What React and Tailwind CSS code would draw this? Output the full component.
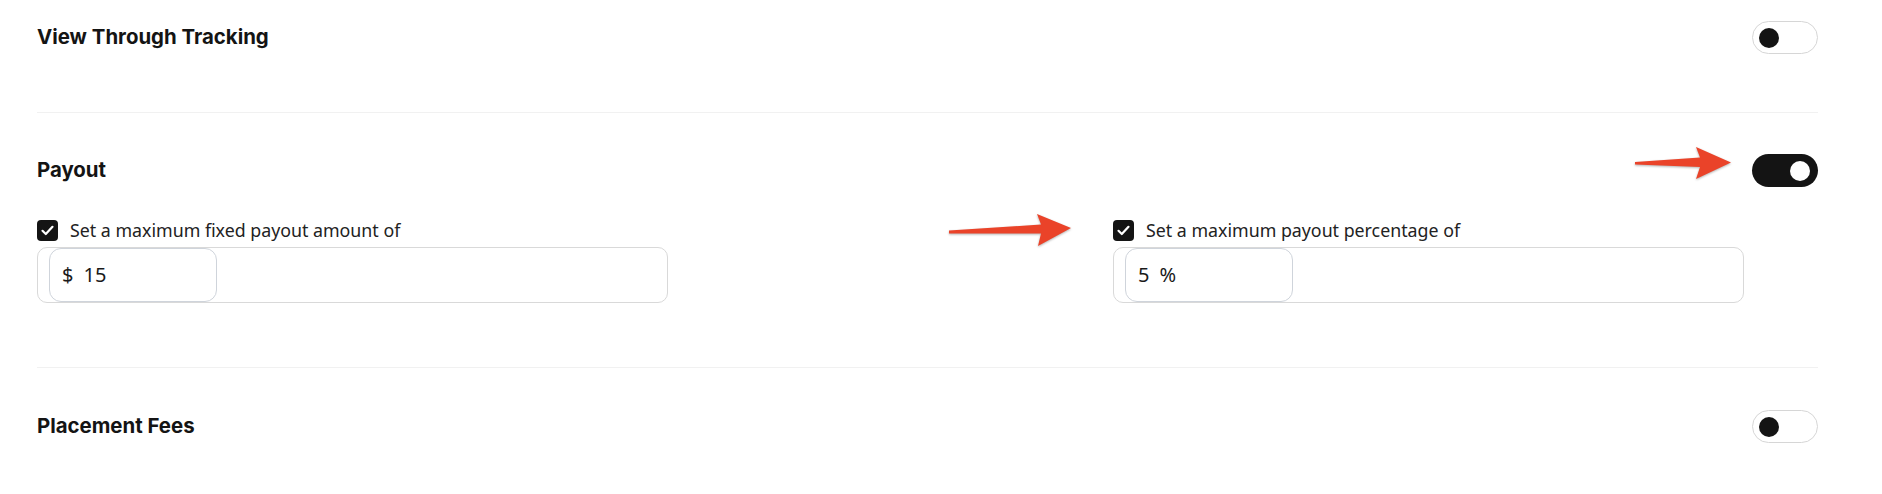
import React from "react";

const headingFont = { fontFamily: "Inter, 'Noto Sans', sans-serif" };

function Toggle({ on }) {
  if (on) {
    return (
      <div className="flex h-[33px] w-[66px] items-center justify-end rounded-full bg-[#141414] pr-[8px]">
        <span className="h-[20px] w-[20px] rounded-full bg-white" />
      </div>
    );
  }
  return (
    <div className="flex h-[33px] w-[66px] items-center rounded-full border border-[#d6d6d6] bg-white pl-[6px]">
      <span className="h-[20px] w-[20px] rounded-full bg-[#141414]" />
    </div>
  );
}

function Checkbox() {
  return (
    <span className="flex h-[21px] w-[21px] items-center justify-center rounded-[4px] bg-[#141414]">
      <svg width="15" height="15" viewBox="0 0 15 15" fill="none">
        <path d="M2.5 7.8 L5.8 11 L12.5 3.8" stroke="white" strokeWidth="2.2" strokeLinecap="round" strokeLinejoin="round" />
      </svg>
    </span>
  );
}

function AmountField({ label, prefix, value }) {
  return (
    <div className="flex flex-col">
      <label className="flex h-[22px] items-center gap-[12px] text-[17.8px] text-[#222]">
        <Checkbox />
        <span>{label}</span>
      </label>
      <div className="mt-[6px] flex h-[56px] w-[631px] rounded-[10px] border border-[#d9d9d9] pl-[11px]">
        <div className="flex w-[168px] items-center gap-[10px] rounded-[12px] border border-[#cfd4db] pl-[12px] text-[20px] text-[#1a1a1a]">
          <span>{prefix}</span>
          <span>{value}</span>
        </div>
      </div>
    </div>
  );
}

function Arrow({ className, d, w, h }) {
  return (
    <svg
      className={className}
      width={w}
      height={h}
      viewBox={`0 0 ${w} ${h}`}
      fill="#ea4329"
    >
      <path d={d} />
    </svg>
  );
}

export default function App() {
  return (
    <div
      className="relative h-[494px] w-full overflow-hidden bg-white pl-[37px] pr-[64px]"
      style={{ fontFamily: "'Noto Sans', sans-serif" }}
    >
      <section className="border-b border-[#f1f1f1] pt-[21px] pb-[58px]">
        <div className="flex h-[33px] items-center justify-between">
          <h3 className="text-[20.4px] font-bold text-[#141414]" style={headingFont}>
            View Through Tracking
          </h3>
          <Toggle />
        </div>
      </section>

      <section className="border-b border-[#f1f1f1] pt-[41px] pb-[64px]">
        <div className="flex h-[33px] items-center justify-between">
          <h3 className="text-[20.4px] font-bold text-[#141414]" style={headingFont}>
            Payout
          </h3>
          <Toggle on />
        </div>
        <div className="mt-[32px] grid grid-cols-[1076px_1fr]">
          <AmountField label="Set a maximum fixed payout amount of" prefix="$" value="15" />
          <AmountField label="Set a maximum payout percentage of" prefix="5" value="%" />
        </div>
      </section>

      <section className="pt-[42px]">
        <div className="flex h-[33px] items-center justify-between">
          <h3 className="text-[20.4px] font-bold text-[#141414]" style={headingFont}>
            Placement Fees
          </h3>
          <Toggle />
        </div>
      </section>

      <Arrow
        className="absolute left-[1630px] top-[142px] drop-shadow-[0_1px_1px_rgba(0,0,0,0.3)]"
        w={110}
        h={40}
        d="M5 20 L70 15.5 L66 5 L101 20.5 L66 37 L70 25 L5 22.5 Z"
      />
      <Arrow
        className="absolute left-[945px] top-[210px] drop-shadow-[0_1px_1px_rgba(0,0,0,0.3)]"
        w={130}
        h={40}
        d="M4 20.5 L96 14.5 L92 4 L126 18 L93 36 L96 23.5 L4 23.5 Z"
      />
    </div>
  );
}
